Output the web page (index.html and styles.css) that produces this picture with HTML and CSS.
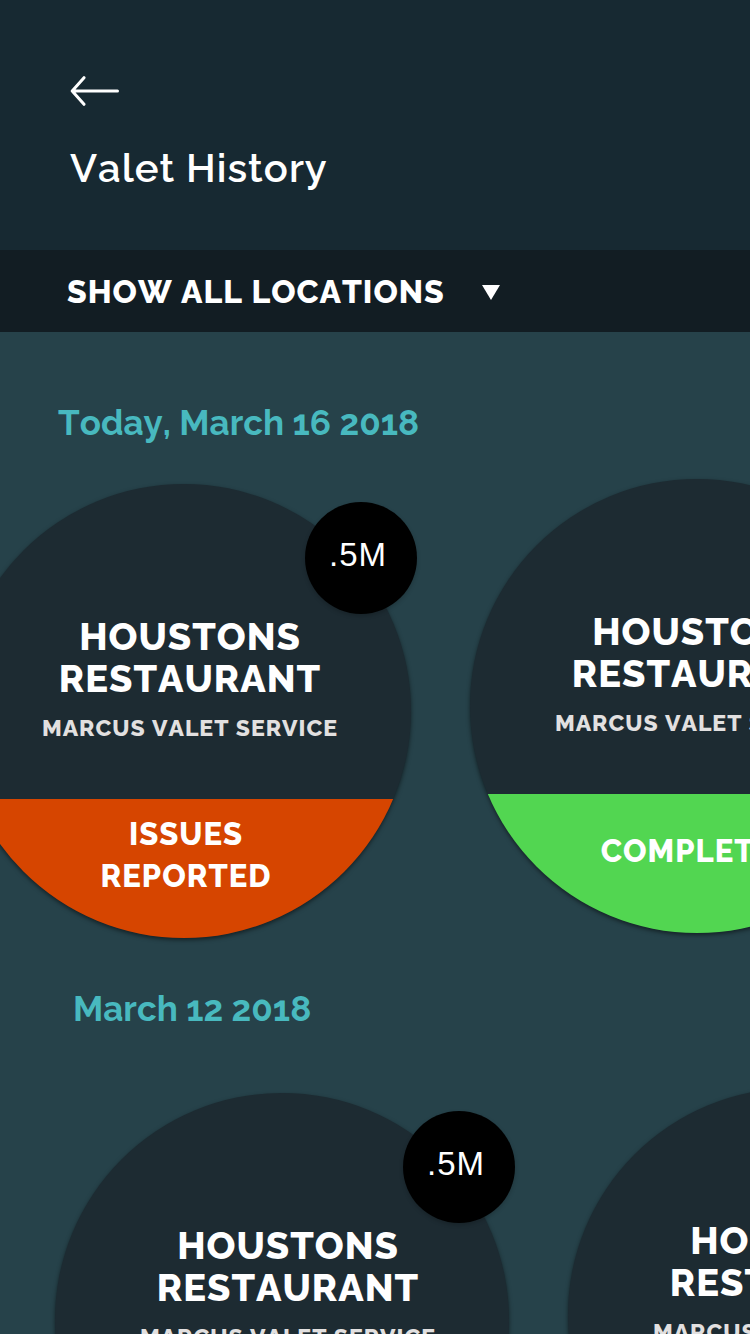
FILE: index.html
```html
<!DOCTYPE html>
<html lang="en">
<head>
<meta charset="utf-8">
<meta name="viewport" content="width=device-width, initial-scale=1">
<title>Valet History</title>
<link rel="stylesheet" href="styles.css">
</head>
<body>
<div class="screen">
  <header class="header">
    <button class="back" type="button" aria-label="Back">
      <svg class="back-icon" viewBox="0 0 50 30" aria-hidden="true"><path d="M14 1.700L2.200 15L14 28.300M2.200 15H47.500"/></svg>
    </button>
    <h1 class="title">Valet History</h1>
  </header>
  <div class="filter">
    <select class="filter-select" aria-label="Location">
      <option>SHOW ALL LOCATIONS</option>
    </select>
    <svg class="filter-arrow" viewBox="0 0 18 15" aria-hidden="true"><path d="M0 0H18L9 15Z"/></svg>
  </div>
  <main class="history">
    <section class="day day-current">
      <h2 class="date">Today, March 16 2018</h2>
      <div class="visits">
        <article class="visit">
          <div class="disc">
            <div class="place"><h3 class="name">HOUSTONS RESTAURANT</h3><p class="service">MARCUS VALET SERVICE</p></div>
            <p class="status status-issue">ISSUES REPORTED</p>
          </div>
          <span class="distance">.5M</span>
        </article>
        <article class="visit">
          <div class="disc">
            <div class="place"><h3 class="name">HOUSTONS RESTAURANT</h3><p class="service">MARCUS VALET SERVICE</p></div>
            <p class="status status-done">COMPLETED</p>
          </div>
          <span class="distance">.5M</span>
        </article>
      </div>
    </section>
    <section class="day day-past">
      <h2 class="date">March 12 2018</h2>
      <div class="visits">
        <article class="visit">
          <div class="disc">
            <div class="place"><h3 class="name">HOUSTONS RESTAURANT</h3><p class="service">MARCUS VALET SERVICE</p></div>
            <p class="status status-issue">ISSUES REPORTED</p>
          </div>
          <span class="distance">.5M</span>
        </article>
        <article class="visit">
          <div class="disc">
            <div class="place"><h3 class="name">HOUSTONS RESTAURANT</h3><p class="service">MARCUS VALET SERVICE</p></div>
            <p class="status status-done">COMPLETED</p>
          </div>
          <span class="distance">.5M</span>
        </article>
      </div>
    </section>
  </main>
</div>
</body>
</html>
```
FILE: styles.css
```css
* {
  box-sizing: border-box;
}

body,
h1,
h2,
h3,
p {
  margin: 0;
}

body {
  background: #26424a;
  color: #fff;
  font-family: Raleway, Lato, sans-serif;
  font-kerning: none;
}

.screen {
  display: flex;
  flex-direction: column;
  height: 100vh;
}

.header {
  flex: none;
  padding: 76px 70px 58px;
  background: #172932;
}

.back {
  display: block;
  padding: 0;
  border: 0;
  background: none;
  cursor: pointer;
}

.back-icon {
  display: block;
  width: 50px;
  height: 30px;
  fill: none;
  stroke: #fff;
  stroke-width: 3;
  stroke-linecap: round;
  stroke-linejoin: round;
}

.title {
  margin-top: 38px;
  font-size: 40px;
  font-weight: 600;
  line-height: 48px;
  letter-spacing: 1px;
}

.filter {
  display: flex;
  flex: none;
  align-items: center;
  padding: 21px 67px 19px;
  background: #121d23;
}

.filter-select {
  width: 415px;
  height: 42px;
  padding: 0;
  border: 0;
  appearance: none;
  background: none;
  color: #fff;
  font: 800 32px/42px Raleway, Lato, sans-serif;
  font-kerning: none;
  letter-spacing: 1px;
}

.filter-arrow {
  width: 18px;
  height: 15px;
  fill: #fff;
  pointer-events: none;
}

.history {
  flex: 1;
  min-height: 0;
  padding-top: 70px;
  overflow: hidden auto;
  scrollbar-width: none;
}

.date {
  color: #48b9bf;
  font-size: 35px;
  font-weight: 700;
  line-height: 42px;
}

.day-current .date {
  padding-left: 58px;
}

.day-past .date {
  padding-left: 73px;
}

.visits {
  display: flex;
  gap: 59px;
  align-items: flex-start;
}

.day-current .visits {
  margin: 35px 0 50px -43px;
}

.day-past .visits {
  margin: 58px 0 50px 55px;
}

.visit {
  position: relative;
  flex: none;
  width: 454px;
}

.visit:first-child {
  margin-top: 5px;
}

.disc {
  display: grid;
  grid-template-rows: 315px 1fr;
  grid-template-columns: minmax(0, 1fr);
  height: 454px;
  overflow: hidden;
  border-radius: 50%;
  background: #1d2b32;
  box-shadow: 0 2px 4px rgb(0 0 0 / 50%);
}

.place {
  padding: 132px 70px 0 82px;
  text-align: center;
}

.name {
  font-size: 38px;
  font-weight: 800;
  line-height: 42px;
  letter-spacing: 1px;
}

.service {
  margin-top: 12px;
  color: #e2e0e0;
  font-size: 23px;
  font-weight: 800;
  line-height: 32px;
  letter-spacing: 1px;
  white-space: nowrap;
}

.status {
  padding: 14px 100px 0 104px;
  font-size: 31px;
  font-weight: 800;
  line-height: 42px;
  letter-spacing: 1px;
  text-align: center;
}

.status-issue {
  background: #d64500;
}

.status-done {
  padding-top: 36px;
  background: #52d651;
}

.distance {
  position: absolute;
  top: 18px;
  left: 348px;
  display: grid;
  width: 112px;
  height: 112px;
  padding: 0 6px 6px 0;
  place-items: center;
  border-radius: 50%;
  background: #000;
  box-shadow: 0 2px 4px rgb(0 0 0 / 20%);
  font-family: "Liberation Sans", sans-serif;
  font-size: 33px;
  letter-spacing: 1px;
}
```
